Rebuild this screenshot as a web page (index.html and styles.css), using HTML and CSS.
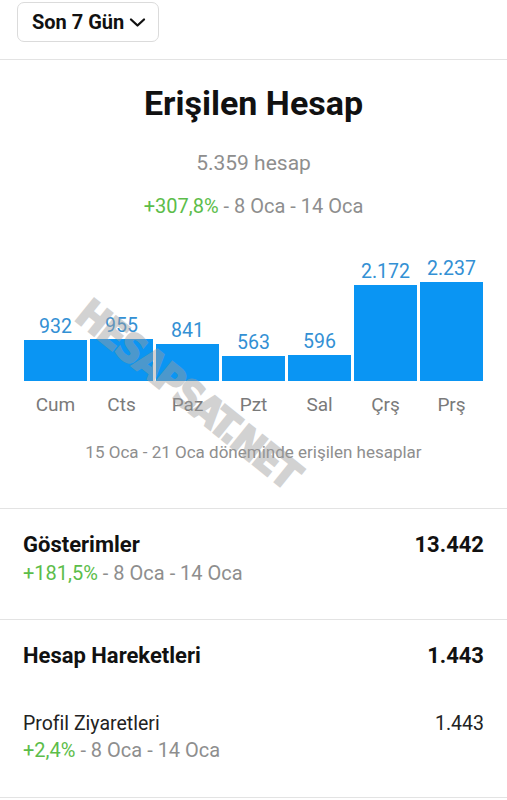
FILE: index.html
```html
<!DOCTYPE html>
<html lang="tr">
<head>
    <meta charset="UTF-8">
    <meta name="viewport" content="width=device-width, initial-scale=1.0">
    <title>Erişilen Hesap</title>
    <link rel="stylesheet" href="styles.css">
</head>
<body>

<div class="top-bar">
    <button class="range-btn">Son 7 Gün
        <svg width="17" height="11" viewBox="0 0 17 11"><path d="M2 2.5 L8.5 8.5 L15 2.5" fill="none" stroke="#111" stroke-width="2.3" stroke-linecap="round" stroke-linejoin="round"/></svg>
    </button>
</div>

<div class="reach">
    <h1>Erişilen Hesap</h1>
    <p class="total">5.359 hesap</p>
    <p class="change"><span class="up">+307,8%</span> - 8 Oca - 14 Oca</p>

    <!-- bar chart, height = value / 2237 * 99 -->
    <div class="chart">
        <div class="col"><span class="val">932</span><div class="bar" style="height: 41px"></div><span class="day">Cum</span></div>
        <div class="col"><span class="val">955</span><div class="bar" style="height: 42px"></div><span class="day">Cts</span></div>
        <div class="col"><span class="val">841</span><div class="bar" style="height: 37px"></div><span class="day">Paz</span></div>
        <div class="col"><span class="val">563</span><div class="bar" style="height: 25px"></div><span class="day">Pzt</span></div>
        <div class="col"><span class="val">596</span><div class="bar" style="height: 26px"></div><span class="day">Sal</span></div>
        <div class="col"><span class="val">2.172</span><div class="bar" style="height: 96px"></div><span class="day">Çrş</span></div>
        <div class="col"><span class="val">2.237</span><div class="bar" style="height: 99px"></div><span class="day">Prş</span></div>
    </div>
    <p class="note">15 Oca - 21 Oca döneminde erişilen hesaplar</p>

    <div class="watermark">HESAPSAT.NET</div>
</div>

<div class="metric">
    <div class="row">
        <span class="name">Gösterimler</span>
        <span class="num">13.442</span>
    </div>
    <p class="change left"><span class="up">+181,5%</span> - 8 Oca - 14 Oca</p>
</div>

<div class="metric">
    <div class="row">
        <span class="name">Hesap Hareketleri</span>
        <span class="num">1.443</span>
    </div>
    <div class="sub">
        <div class="row">
            <span class="sub-name">Profil Ziyaretleri</span>
            <span class="sub-num">1.443</span>
        </div>
        <p class="change left"><span class="up">+2,4%</span> - 8 Oca - 14 Oca</p>
    </div>
</div>

</body>
</html>
```

FILE: styles.css
```css
body {
    margin: 0;
    font-family: Roboto, "Liberation Sans", sans-serif;
    color: #111;
    background: #fff;
}
p {
    margin: 0;
}

.top-bar {
    height: 60px;
    padding: 2px 0 0 17px;
    box-sizing: border-box;
    border-bottom: 1px solid #e3e3e3;
}
.range-btn {
    display: inline-flex;
    align-items: center;
    gap: 5px;
    height: 40px;
    width: 142px;
    padding: 0 0 0 14px;
    border: 1px solid #dbdbdb;
    border-radius: 7px;
    background: #fff;
    font-family: inherit;
    font-size: 20px;
    font-weight: 700;
    color: #111;
}

.reach {
    position: relative;
    overflow: hidden;
    text-align: center;
    padding: 23px 0 46px;
    border-bottom: 1px solid #e3e3e3;
}
.reach h1 {
    margin: 0;
    font-size: 34px;
    font-weight: 700;
    line-height: 40px;
}
.total {
    margin-top: 28px;
    font-size: 21px;
    line-height: 24px;
    color: #8e8e8e;
}
.change {
    margin-top: 19px;
    font-size: 20px;
    line-height: 24px;
    color: #8e8e8e;
}
.change .up {
    color: #5cbd4a;
}
.change.left {
    margin-top: 3px;
    text-align: left;
}

.chart {
    display: flex;
    align-items: flex-end;
    gap: 3px;
    margin: 40px 24px 0;
}
.col {
    flex: 1;
    display: flex;
    flex-direction: column;
    align-items: stretch;
}
.val {
    font-size: 19.5px;
    line-height: 22px;
    color: #3390d4;
    margin-bottom: 2px;
}
.bar {
    background: #0a95f3;
}
.day {
    margin-top: 13px;
    font-size: 19px;
    line-height: 22px;
    color: #7a7a7a;
}
.note {
    margin-top: 26px;
    font-size: 17px;
    line-height: 20px;
    color: #8e8e8e;
}

/* watermark lies over the chart */
.watermark {
    position: absolute;
    left: 188px;
    top: 334px;
    transform: translate(-50%, -50%) rotate(39deg);
    white-space: nowrap;
    font-family: "DejaVu Sans Condensed", "DejaVu Sans", sans-serif;
    font-weight: 700;
    font-size: 40px;
    line-height: 44px;
    letter-spacing: -2px;
    color: #9d9d9d;
    -webkit-text-stroke: 2px #9d9d9d;
    opacity: 0.45;
    pointer-events: none;
}

.metric {
    padding: 23px 23px 34px;
    border-bottom: 1px solid #e3e3e3;
}
.metric + .metric {
    padding-bottom: 35px;
}
.row {
    display: flex;
    justify-content: space-between;
    align-items: baseline;
}
.name,
.num {
    font-size: 22px;
    font-weight: 700;
    line-height: 26px;
}
.sub {
    margin-top: 43px;
}
.sub-name,
.sub-num {
    font-size: 19.5px;
    line-height: 23px;
    color: #222;
}
```
